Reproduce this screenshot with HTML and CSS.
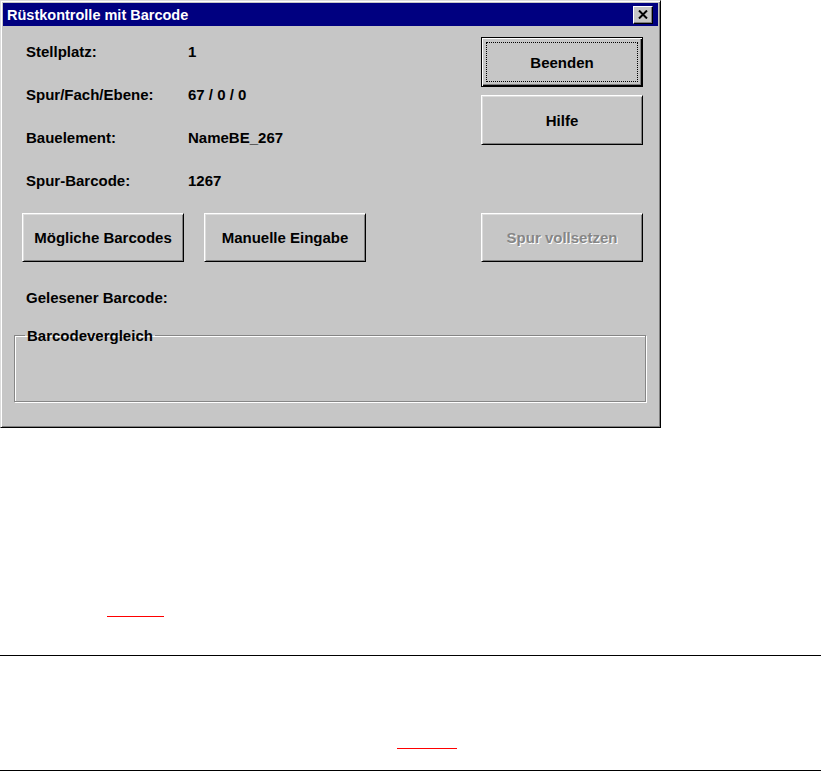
FILE: index.html
```html
<!DOCTYPE html>
<html lang="de">
<head>
  <meta charset="UTF-8">
  <title>Rüstkontrolle mit Barcode</title>
  <link rel="stylesheet" href="styles.css">
</head>
<body>
  <div class="dialog">
    <div class="titlebar flex flex-align-center">
      <span class="flex-1">Rüstkontrolle mit Barcode</span>
      <button class="close" type="button">
        <svg width="10" height="9" viewBox="0 0 10 9"><path d="M1 0.5L9 8.5M9 0.5L1 8.5" stroke="#000" stroke-width="2"/></svg>
      </button>
    </div>
    <div class="dialog-body">
      <div class="top flex">
        <div class="fields">
          <div class="row flex flex-align-center"><span class="label">Stellplatz:</span><span>1</span></div>
          <div class="row flex flex-align-center"><span class="label">Spur/Fach/Ebene:</span><span>67 / 0 / 0</span></div>
          <div class="row flex flex-align-center"><span class="label">Bauelement:</span><span>NameBE_267</span></div>
          <div class="row flex flex-align-center"><span class="label">Spur-Barcode:</span><span>1267</span></div>
        </div>
        <div class="side flex flex-v">
          <button class="btn btn-default" type="button">Beenden</button>
          <button class="btn" type="button">Hilfe</button>
        </div>
      </div>
      <div class="btn-row flex">
        <button class="btn" type="button">Mögliche Barcodes</button>
        <button class="btn" type="button">Manuelle Eingabe</button>
        <button class="btn btn-disabled" type="button" disabled>Spur vollsetzen</button>
      </div>
      <div class="read">Gelesener Barcode:</div>
      <fieldset class="group">
        <legend>Barcodevergleich</legend>
      </fieldset>
    </div>
  </div>

  <div class="note note-a"><a class="ref"></a></div>
  <hr class="rule rule-a">
  <div class="note note-b"><a class="ref"></a></div>
  <hr class="rule rule-b">
</body>
</html>
```

FILE: styles.css
```css
*{
  margin: 0;
  padding: 0;
  box-sizing: border-box;
}
/* flex helpers */
.flex{display:flex;}
.flex-v{flex-direction:column;}
.flex-1{flex:1;}
.flex-align-center{align-items:center;}

body{
  background: #fff;
  font-family: "Liberation Sans", Arial, sans-serif;
}

/* ---- dialog window ---- */
.dialog{
  width: 661px;
  height: 428px;
  background: #c6c6c6;
  border: 1px solid;
  border-color: #dcdcdc #000 #000 #dcdcdc;
  box-shadow: inset 1px 1px #fff, inset -1px -1px #808080;
  padding: 2px;
}
.titlebar{
  height: 23px;
  background: #000080;
  color: #fff;
  font-size: 14.5px;
  font-weight: bold;
  padding: 0 5px 0 4px;
}
.close{
  width: 20px;
  height: 18px;
  background: #c6c6c6;
  border: 1px solid;
  border-color: #fff #000 #000 #fff;
  box-shadow: inset -1px -1px #808080;
  display: flex;
  align-items: center;
  justify-content: center;
}
.close svg{
  display: block;
}

.dialog-body{
  padding: 4px 12px 0 11px;
  font-size: 15px;
  font-weight: bold;
  color: #000;
}
.fields{
  padding-left: 12px;
}
.row{
  height: 43px;
}
.label{
  width: 162px;
}
.side{
  margin-left: auto;
  margin-right: 3px;
  padding-top: 7px;
  gap: 8px;
}

.btn{
  width: 162px;
  height: 50px;
  font-family: inherit;
  font-size: 15px;
  font-weight: bold;
  color: #000;
  background: #c6c6c6;
  border: 1px solid;
  border-color: #fff #000 #000 #fff;
  box-shadow: inset 1px 1px #dcdcdc, inset -1px -1px #808080;
}
.btn-default{
  border-color: #000;
  box-shadow: inset 1px 1px #fff, inset -1px -1px #000, inset -2px -2px #808080;
  outline: 1px dotted #000;
  outline-offset: -6px;
}
.btn-disabled{
  color: #868686;
  text-shadow: 1px 1px #fff;
}

.btn-row{
  margin-top: 11px;
  padding: 0 3px 0 8px;
  gap: 20px;
}
.btn-row .btn{
  height: 49px;
}
.btn-row .btn-disabled{
  margin-left: auto;
}

.read{
  margin-top: 14px;
  padding-left: 12px;
  height: 43px;
  line-height: 43px;
}

.group{
  margin-top: 8px;
  height: 75px;
  border: 1px solid #868686;
  box-shadow: 1px 1px #fff, inset 1px 1px #fff;
}
.group legend{
  margin-left: 10px;
  padding: 0 2px;
  line-height: 17px;
}

/* ---- page below the picture ---- */
.note{
  display: flex;
  align-items: flex-end;
}
.note-a{
  height: 189px;
}
.note-b{
  height: 93px;
}
.ref{
  display: block;
  height: 1px;
  background: #f00;
}
.note-a .ref{
  margin-left: 107px;
  width: 57px;
}
.note-b .ref{
  margin-left: 397px;
  width: 60px;
}
.rule{
  border: 0;
  height: 1px;
  width: 821px;
  background: #000;
}
.rule-a{
  margin-top: 38px;
}
.rule-b{
  margin-top: 21px;
}
```
